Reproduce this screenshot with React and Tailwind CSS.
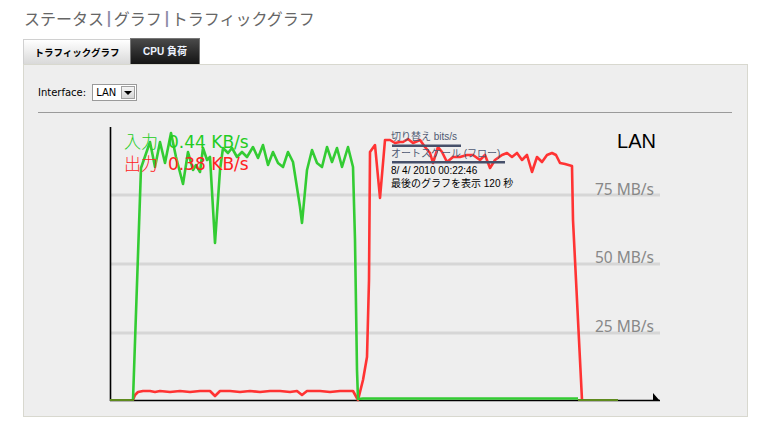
import React from "react";

const green = [
  [133, 400], [141, 168], [150, 142], [155, 167], [160, 142], [165, 163], [171, 133], [176, 157],
  [183, 184], [188, 152], [193, 170], [196, 165], [200, 172], [203, 148], [207, 160], [210, 157],
  [215, 243], [220, 170], [223, 148], [228, 153], [232, 148], [237, 157], [242, 152], [247, 157],
  [253, 147], [258, 158], [263, 145], [268, 165], [273, 152], [278, 163], [283, 167], [288, 152],
  [293, 162], [300, 207], [302, 223], [307, 170], [312, 150], [317, 163], [322, 167], [327, 147],
  [332, 162], [337, 148], [342, 167], [348, 147], [353, 167], [355, 240], [357, 370], [358, 399],
  [363, 398.5], [578, 398.5],
];

const red = [
  [133, 400], [135, 395], [138, 392], [143, 391], [150, 391], [155, 392], [160, 391], [170, 392],
  [180, 391], [190, 392], [200, 391], [210, 391], [215, 396], [220, 391], [230, 391], [240, 392],
  [250, 391], [260, 392], [270, 391], [280, 391], [290, 392], [297, 391], [302, 395], [307, 391],
  [320, 391], [330, 392], [340, 391], [353, 391], [358, 400], [363, 380], [367, 357], [369, 280],
  [370, 152], [375, 145], [380, 198], [385, 140], [390, 140], [395, 143], [400, 142], [403, 142],
  [408, 139], [413, 143], [420, 140], [425, 147], [430, 153], [433, 163], [438, 147], [442, 152],
  [447, 162], [453, 157], [460, 157], [467, 155], [473, 155], [480, 160], [485, 155], [490, 168],
  [495, 160], [502, 155], [507, 153], [512, 157], [517, 153], [522, 160], [527, 155], [532, 172],
  [537, 157], [542, 162], [547, 155], [552, 153], [556, 155], [560, 163], [565, 164], [572, 166],
  [573, 220], [576, 280], [582, 400],
];

const pts = (a) => a.map((p) => p.join(",")).join(" ");

function TrafficChart() {
  // viewBox uses page coordinates so the numbers read straight off the screenshot
  return (
    <svg className="block h-[296px] w-[693px]" viewBox="38 113 693 296">
      {/* grid */}
      {[195, 264, 333].map((y) => (
        <line key={y} x1="110" y1={y} x2="660" y2={y} stroke="#d6d6d6" strokeWidth="3" />
      ))}
      {/* axes */}
      <line x1="110.5" y1="127" x2="110.5" y2="401" stroke="#000" strokeWidth="1.6" />
      <line x1="110" y1="400.5" x2="660" y2="400.5" stroke="#000" strokeWidth="1.6" />
      <polygon points="653,393 660,401 653,401" fill="#000" />

      {/* traffic */}
      <polyline points={pts(red)} fill="none" stroke="#ff3333" strokeWidth="2.6" strokeLinejoin="round" />
      <polyline points={pts(green)} fill="none" stroke="#33cc33" strokeWidth="2.6" strokeLinejoin="round" />
      <line x1="110" y1="400" x2="134" y2="400" stroke="#5e8a1e" strokeWidth="2" />
      <line x1="578" y1="400" x2="618" y2="400" stroke="#5e8a1e" strokeWidth="2" />

      {/* scale labels */}
      <g fill="#888888" fontSize="15.5" fontFamily="'Noto Sans', sans-serif" textAnchor="end">
        <text x="654" y="195">75 MB/s</text>
        <text x="654" y="263">50 MB/s</text>
        <text x="654" y="332">25 MB/s</text>
      </g>
      <text x="656" y="148" textAnchor="end" fontSize="20" fontFamily="'Liberation Sans', sans-serif" fill="#000">
        LAN
      </text>

      {/* legend */}
      <g fontSize="17" fontFamily="'DejaVu Sans', 'Noto Sans CJK JP', sans-serif">
        <text y="148" fill="#22cc22">
          <tspan x="124" fontFamily="'Noto Sans CJK JP', sans-serif" fontWeight="300">入力</tspan>
          <tspan x="168">0.44 KB/s</tspan>
        </text>
        <text y="169.5" fill="#ff2222">
          <tspan x="124" fontFamily="'Noto Sans CJK JP', sans-serif" fontWeight="300">出力</tspan>
          <tspan x="168">0.38 KB/s</tspan>
        </text>
      </g>

      {/* options */}
      <g fontSize="10" fontFamily="'Liberation Sans', 'Noto Sans CJK JP', sans-serif">
        <text x="391" y="140" fill="#4f5972">切り替え bits/s</text>
        <rect x="392" y="144.5" width="69" height="2.5" fill="#46506a" />
        <text x="391" y="157" fill="#4f5972">オートスケール (フロー)</text>
        <rect x="392" y="161" width="113" height="2.5" fill="#46506a" />
        <text x="391" y="174" fill="#000">8/ 4/ 2010 00:22:46</text>
        <text x="391" y="187" fill="#000">最後のグラフを表示 120 秒</text>
      </g>
    </svg>
  );
}

export default function App() {
  return (
    <div className="min-h-[428px] w-[760px] bg-white">
      <div className="flex h-[28px] items-end pl-[24px] text-[16px] leading-[20px] text-[#666] font-['Noto_Sans_CJK_JP',sans-serif]">
        <span>ステータス</span>
        <span className="mx-[2px] font-bold text-[#8d8aa6] font-['DejaVu_Sans',sans-serif]">|</span>
        <span>グラフ</span>
        <span className="mx-[2px] font-bold text-[#8d8aa6] font-['DejaVu_Sans',sans-serif]">|</span>
        <span>トラフィックグラフ</span>
      </div>

      <div className="mt-[10px] ml-[23px] flex h-[26px] items-end">
        <div className="flex h-[25px] w-[107px] items-center justify-center border-t border-l border-[#d0d0d0] bg-gradient-to-b from-white to-[#d9d9d9] text-[9.5px] font-bold text-black font-['Noto_Sans_CJK_JP',sans-serif]">
          トラフィックグラフ
        </div>
        <div className="flex h-[26px] w-[70px] items-center justify-center border border-b-0 border-[#777] bg-gradient-to-b from-[#4a4a4a] to-[#151515] text-[10px] font-bold text-[#eef3ff] font-['Liberation_Sans','Noto_Sans_CJK_JP',sans-serif]">
          CPU 負荷
        </div>
      </div>

      <div className="ml-[23px] w-[725px] border border-[#d8d8cf] bg-[#eeeeee] pl-[14px] pr-[15px] pb-[7px]">
        <div className="flex h-[47px] items-start gap-[6px] pt-[19px] font-['DejaVu_Sans',sans-serif] text-[10px] text-black">
          <span className="leading-[17px]">Interface:</span>
          <div className="flex h-[17px] w-[45px] items-center border border-[#9a9a9a] bg-white">
            <span className="pl-[3px] leading-none">LAN</span>
            <div className="ml-auto mr-[1px] flex h-[13px] w-[14px] items-center justify-center border border-[#a0a0a0] bg-gradient-to-b from-[#f4f4f4] to-[#d6d6d6]">
              <div className="h-0 w-0 border-x-[4px] border-t-[4px] border-x-transparent border-t-black" />
            </div>
          </div>
        </div>
        <div className="h-px bg-[#9a9a9a]" />
        <TrafficChart />
      </div>
    </div>
  );
}
